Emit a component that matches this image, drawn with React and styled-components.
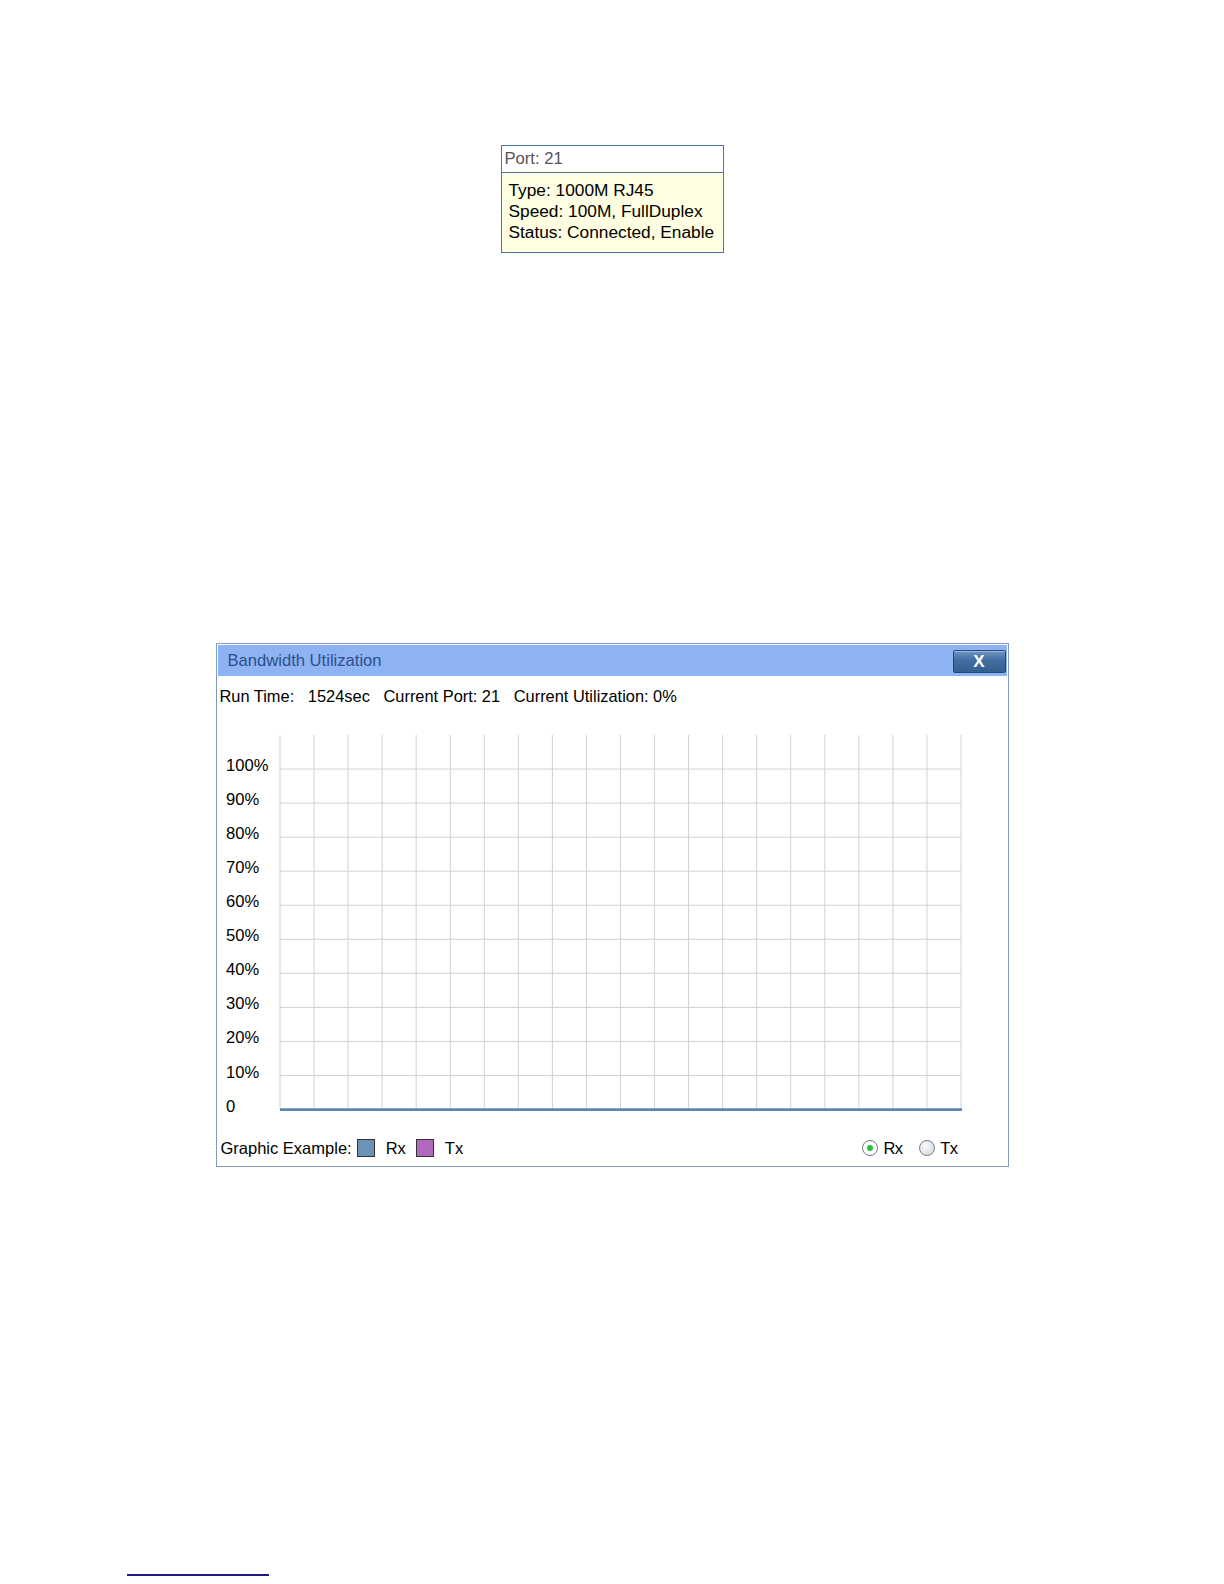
import React from 'react';
import styled, { createGlobalStyle } from 'styled-components';

const GlobalStyle = createGlobalStyle`
  html, body {
    margin: 0;
    padding: 0;
    background: #ffffff;
  }
  body {
    font-family: "Liberation Sans", Arial, sans-serif;
    color: #000;
  }
`;

const Page = styled.div`
  width: 1224px;
  height: 1584px;
  padding-top: 145px;
  box-sizing: border-box;
  display: flex;
  flex-direction: column;
  align-items: center;
`;

const Tooltip = styled.div`
  width: 223px;
  border: 1px solid #4b79a6;
  box-sizing: border-box;
  background: #fefee2;
`;

const TooltipHead = styled.div`
  height: 26px;
  line-height: 26px;
  padding-left: 3px;
  background: #ffffff;
  border-bottom: 1px solid #4b79a6;
  font-size: 16.6px;
  color: #555;
`;

const TooltipBody = styled.div`
  padding: 7px 0 8px 7px;
  font-size: 17.3px;
  line-height: 21.2px;
  white-space: nowrap;
`;

const Dialog = styled.div`
  margin-top: 390px;
  width: 793px;
  height: 524px;
  box-sizing: border-box;
  border: 1px solid #7d9ec0;
  padding: 1px;
  display: flex;
  flex-direction: column;
  background: #fff;
`;

const TitleBar = styled.div`
  height: 31px;
  background: #8eb3f4;
  display: flex;
  align-items: flex-start;
  justify-content: space-between;
  padding: 0 1px 0 10px;
`;

const Title = styled.span`
  font-size: 16.6px;
  line-height: 31px;
  color: #2c4f8c;
`;

const CloseButton = styled.button`
  width: 53px;
  height: 23px;
  margin-top: 5px;
  border: 1px solid #22477a;
  border-radius: 2px;
  background: linear-gradient(#6d94c3 0%, #426ea2 45%, #33608f 100%);
  box-shadow: inset 0 1px 0 rgba(255, 255, 255, 0.35);
  color: #fff;
  font-family: "Liberation Sans", Arial, sans-serif;
  font-weight: bold;
  font-size: 17px;
  line-height: 1;
  padding: 0;
  display: flex;
  align-items: center;
  justify-content: center;
`;

const InfoRow = styled.div`
  margin-top: 10px;
  padding-left: 2px;
  font-size: 16.4px;
  line-height: 20px;
  white-space: pre;
`;

const Chart = styled.svg`
  display: block;
  margin-top: 9px;
  font-family: "Liberation Sans", Arial, sans-serif;
`;

const Legend = styled.div`
  margin-top: 18px;
  display: flex;
  align-items: center;
  font-size: 16.5px;
  line-height: 20px;
  padding-left: 3px;
  padding-right: 49px;
`;

const Swatch = styled.span`
  width: 18px;
  height: 18px;
  box-sizing: border-box;
  border: 1px solid #333;
  background: ${p => p.color};
  margin: 0 11px 0 ${p => p.first ? '5px' : '10px'};
`;

const Spacer = styled.div`
  flex: 1;
`;

const Radio = styled.span`
  display: inline-flex;
  align-items: center;
  margin-left: ${p => p.gap}px;
  gap: 5px;
  letter-spacing: -0.6px;
`;

const RadioDot = styled.span`
  width: 16px;
  height: 16px;
  box-sizing: border-box;
  border-radius: 50%;
  border: 1px solid #6d7f91;
  background: ${p => p.checked ? '#fff' : 'radial-gradient(circle at 40% 35%, #fafafa, #d0d4d9)'};
  display: inline-flex;
  align-items: center;
  justify-content: center;
  &::after {
    content: '';
    width: 6px;
    height: 6px;
    border-radius: 50%;
    background: #2fbf3c;
    display: ${p => p.checked ? 'block' : 'none'};
  }
`;

const Footnote = styled.div`
  margin-top: 407px;
  align-self: flex-start;
  margin-left: 127px;
  width: 142px;
  height: 2px;
  background: #1b1b86;
`;

const CELL = 34.05;
const X0 = 62;
const Y0 = 20;
const COLS = 20;
const ROWS = 11;
const labels = ['100%', '90%', '80%', '70%', '60%', '50%', '40%', '30%', '20%', '10%', '0'];

const BandwidthChart = () => {
  const right = X0 + COLS * CELL;
  const bottom = Y0 + ROWS * CELL;
  return (
    <Chart width="789" height="405" viewBox="0 0 789 405">
      {Array.from({ length: COLS + 1 }, (_, i) => (
        <line key={'v' + i} x1={X0 + i * CELL} x2={X0 + i * CELL} y1={Y0} y2={bottom}
          stroke="#d2d2d2" strokeWidth="1" />
      ))}
      {Array.from({ length: ROWS - 1 }, (_, i) => (
        <line key={'h' + i} x1={X0} x2={right} y1={Y0 + (i + 1) * CELL} y2={Y0 + (i + 1) * CELL}
          stroke="#d2d2d2" strokeWidth="1" />
      ))}
      <line x1={X0} x2={right + 1} y1={bottom} y2={bottom} stroke="#5b86b1" strokeWidth="2.8" />
      {labels.map((l, i) => (
        <text key={l} x="8" y={Y0 + (i + 1) * CELL + 2} fontSize="16.6" fill="#000">{l}</text>
      ))}
    </Chart>
  );
};

const App = () => (
  <>
    <GlobalStyle />
    <Page>
      <Tooltip>
        <TooltipHead>Port: 21</TooltipHead>
        <TooltipBody>
          <div>Type: 1000M RJ45</div>
          <div>Speed: 100M, FullDuplex</div>
          <div>Status: Connected, Enable</div>
        </TooltipBody>
      </Tooltip>

      <Dialog>
        <TitleBar>
          <Title>Bandwidth Utilization</Title>
          <CloseButton>X</CloseButton>
        </TitleBar>
        <InfoRow>{'Run Time:   1524sec   Current Port: 21   Current Utilization: 0%'}</InfoRow>
        <BandwidthChart />
        <Legend>
          Graphic Example:
          <Swatch first color="#6b92b7" />
          Rx
          <Swatch color="#b169c0" />
          Tx
          <Spacer />
          <Radio gap={0}><RadioDot checked />Rx</Radio>
          <Radio gap={17}><RadioDot />Tx</Radio>
        </Legend>
      </Dialog>

      <Footnote />
    </Page>
  </>
);

export default App;
